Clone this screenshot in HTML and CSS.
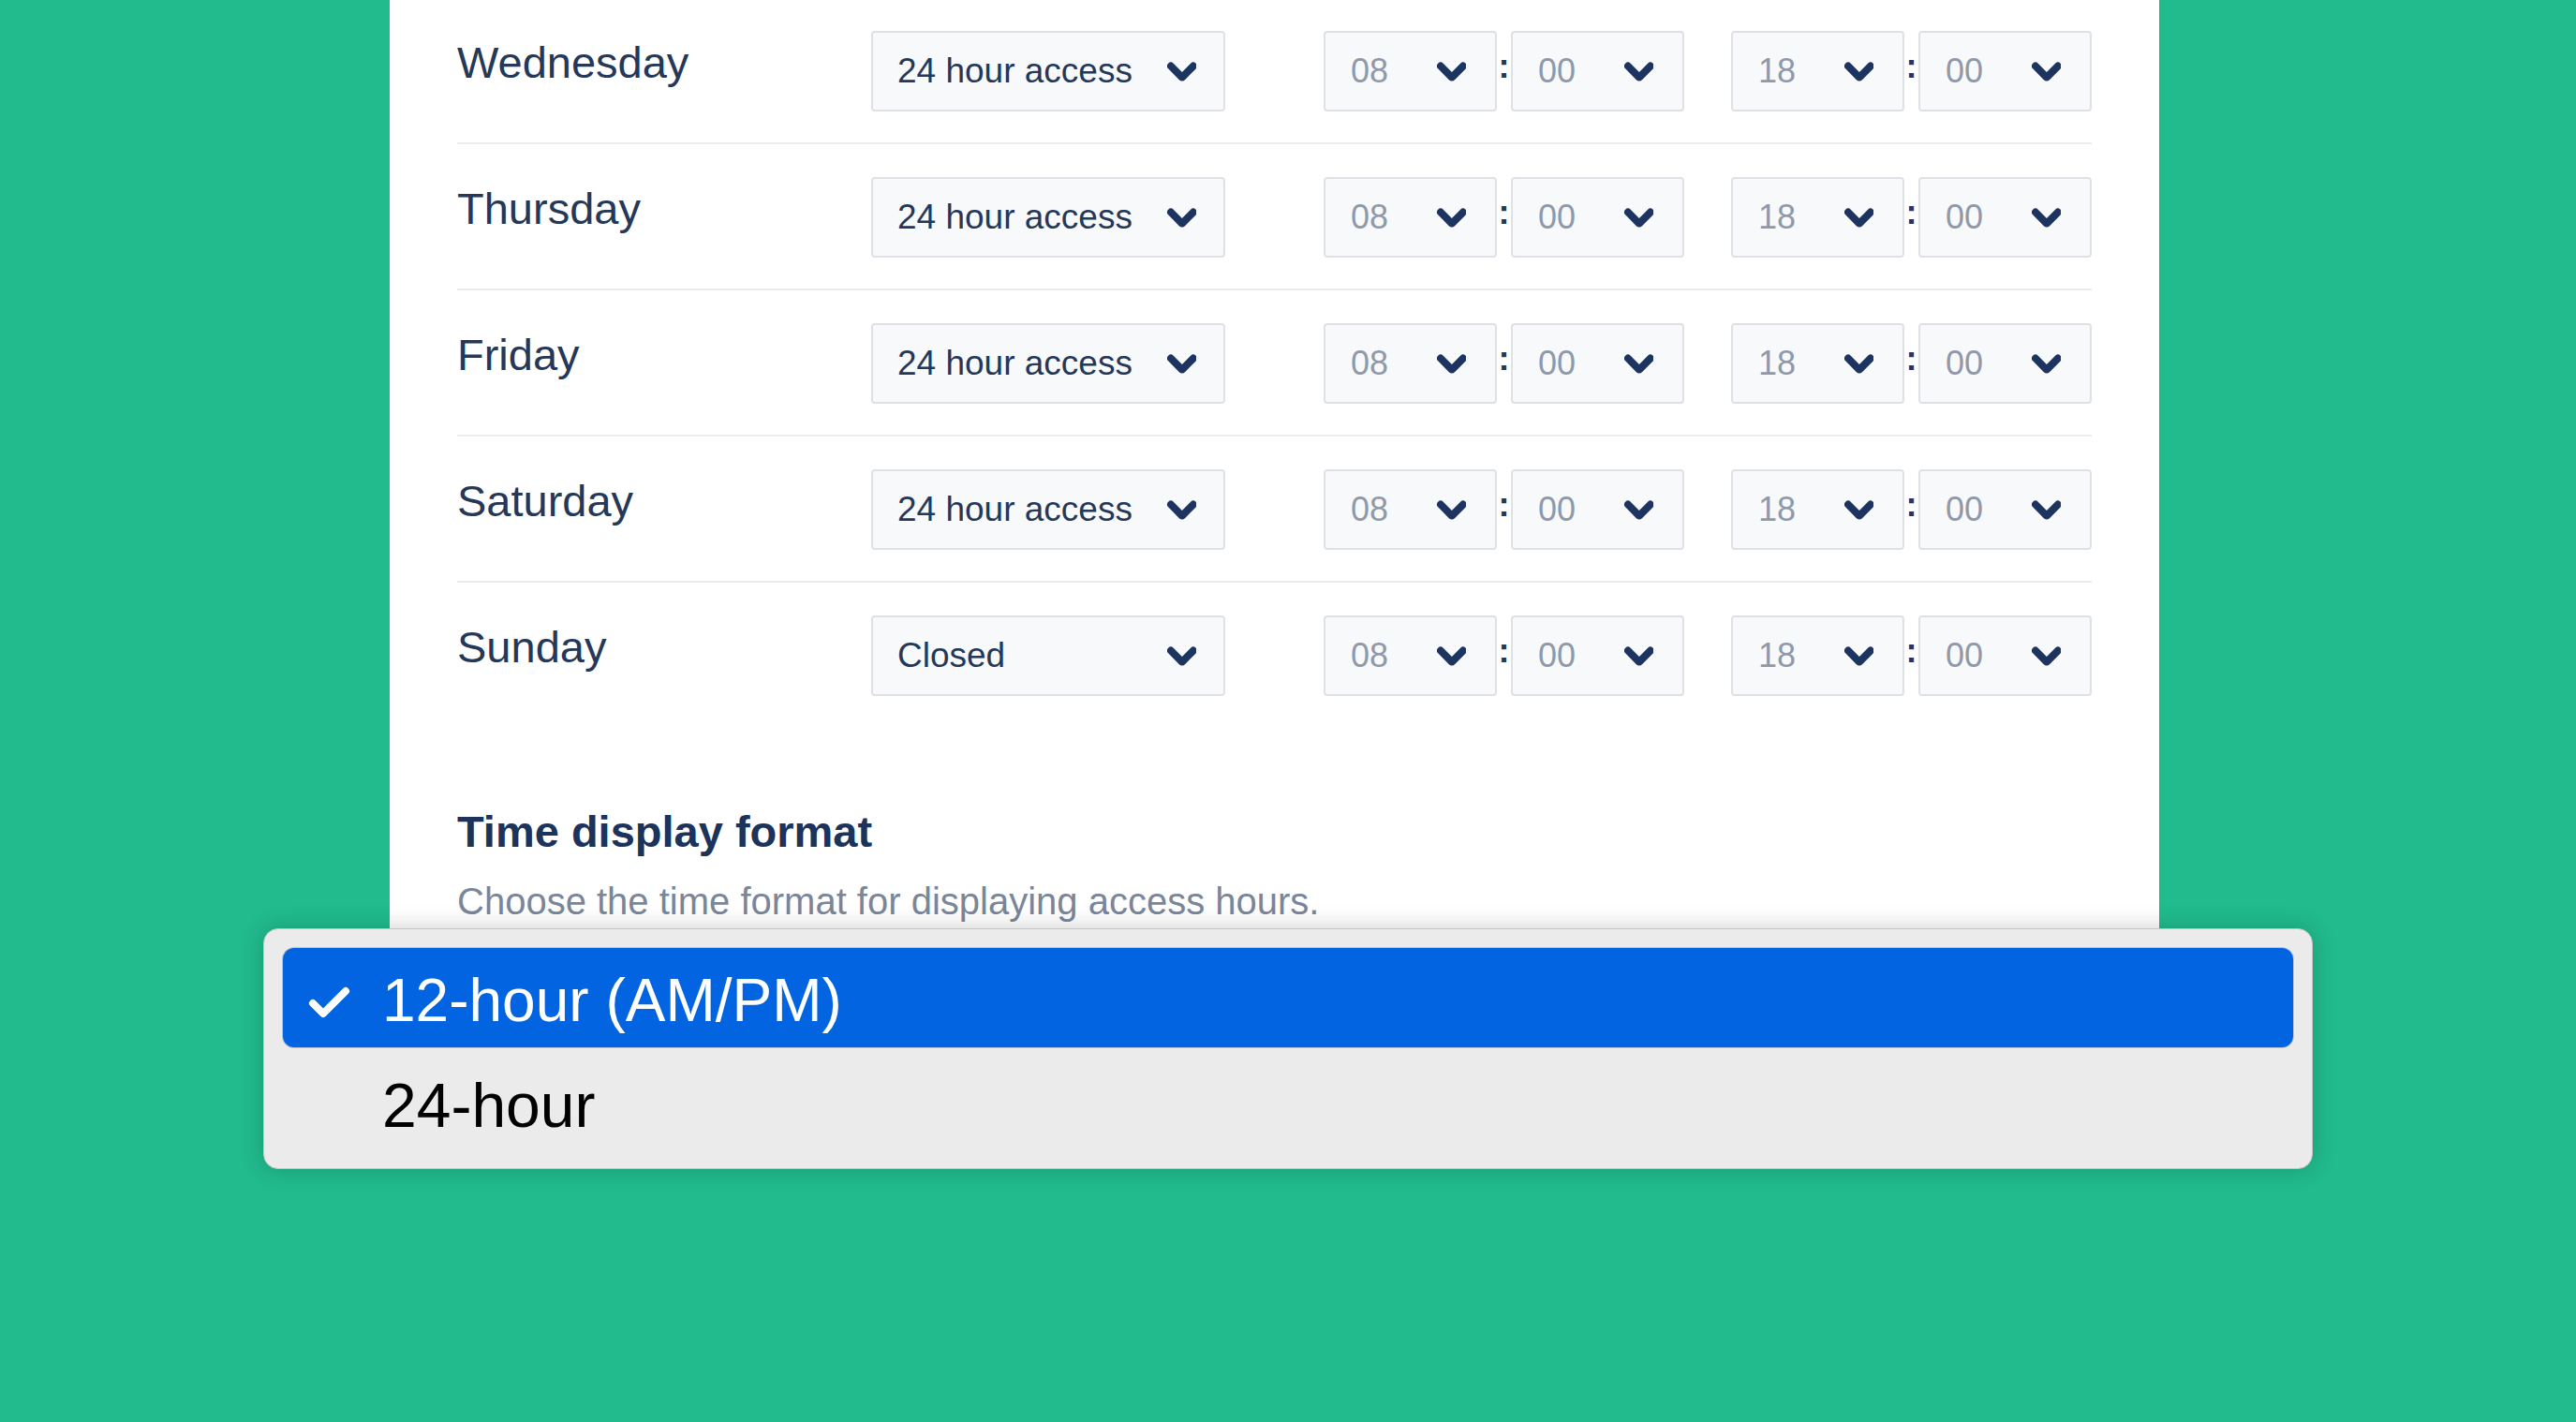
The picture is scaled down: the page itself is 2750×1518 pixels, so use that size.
FILE: index.html
```html
<!DOCTYPE html>
<html lang="en">
<head>
<meta charset="utf-8">
<title>Access hours</title>
<link rel="stylesheet" href="styles.css">
</head>
<body>
<svg width="0" height="0" class="defs" aria-hidden="true">
  <defs>
    <symbol id="chev" viewBox="8 9.9 7.8 5.2">
      <path d="M8.292 10.293a1.009 1.009 0 0 0 0 1.419l2.939 2.965c.218.215.5.322.779.322s.556-.107.769-.322l2.93-2.955a1.01 1.01 0 0 0 0-1.419.987.987 0 0 0-1.406 0l-2.298 2.317-2.307-2.327a.99.99 0 0 0-1.406 0z"/>
    </symbol>
  </defs>
</svg>
<main class="panel">
  <div class="rows">
    <div class="row">
      <div class="day">Wednesday</div>
      <div class="select access"><span>24 hour access</span><svg class="chev"><use href="#chev"/></svg></div>
      <div class="time first">
        <div class="select num"><span>08</span><svg class="chev"><use href="#chev"/></svg></div><span class="colon">:</span>
        <div class="select num"><span>00</span><svg class="chev"><use href="#chev"/></svg></div>
      </div>
      <div class="time second">
        <div class="select num"><span>18</span><svg class="chev"><use href="#chev"/></svg></div><span class="colon">:</span>
        <div class="select num"><span>00</span><svg class="chev"><use href="#chev"/></svg></div>
      </div>
    </div>
    <div class="row">
      <div class="day">Thursday</div>
      <div class="select access"><span>24 hour access</span><svg class="chev"><use href="#chev"/></svg></div>
      <div class="time first">
        <div class="select num"><span>08</span><svg class="chev"><use href="#chev"/></svg></div><span class="colon">:</span>
        <div class="select num"><span>00</span><svg class="chev"><use href="#chev"/></svg></div>
      </div>
      <div class="time second">
        <div class="select num"><span>18</span><svg class="chev"><use href="#chev"/></svg></div><span class="colon">:</span>
        <div class="select num"><span>00</span><svg class="chev"><use href="#chev"/></svg></div>
      </div>
    </div>
    <div class="row">
      <div class="day">Friday</div>
      <div class="select access"><span>24 hour access</span><svg class="chev"><use href="#chev"/></svg></div>
      <div class="time first">
        <div class="select num"><span>08</span><svg class="chev"><use href="#chev"/></svg></div><span class="colon">:</span>
        <div class="select num"><span>00</span><svg class="chev"><use href="#chev"/></svg></div>
      </div>
      <div class="time second">
        <div class="select num"><span>18</span><svg class="chev"><use href="#chev"/></svg></div><span class="colon">:</span>
        <div class="select num"><span>00</span><svg class="chev"><use href="#chev"/></svg></div>
      </div>
    </div>
    <div class="row">
      <div class="day">Saturday</div>
      <div class="select access"><span>24 hour access</span><svg class="chev"><use href="#chev"/></svg></div>
      <div class="time first">
        <div class="select num"><span>08</span><svg class="chev"><use href="#chev"/></svg></div><span class="colon">:</span>
        <div class="select num"><span>00</span><svg class="chev"><use href="#chev"/></svg></div>
      </div>
      <div class="time second">
        <div class="select num"><span>18</span><svg class="chev"><use href="#chev"/></svg></div><span class="colon">:</span>
        <div class="select num"><span>00</span><svg class="chev"><use href="#chev"/></svg></div>
      </div>
    </div>
    <div class="row">
      <div class="day">Sunday</div>
      <div class="select access"><span>Closed</span><svg class="chev"><use href="#chev"/></svg></div>
      <div class="time first">
        <div class="select num"><span>08</span><svg class="chev"><use href="#chev"/></svg></div><span class="colon">:</span>
        <div class="select num"><span>00</span><svg class="chev"><use href="#chev"/></svg></div>
      </div>
      <div class="time second">
        <div class="select num"><span>18</span><svg class="chev"><use href="#chev"/></svg></div><span class="colon">:</span>
        <div class="select num"><span>00</span><svg class="chev"><use href="#chev"/></svg></div>
      </div>
    </div>
  </div>
  <section class="format">
    <h2 class="format-title">Time display format</h2>
    <p class="format-desc">Choose the time format for displaying access hours.</p>
  </section>
</main>
<div class="menu" role="listbox">
  <div class="item selected" role="option" aria-selected="true">
    <svg class="check" viewBox="0 0 47 36"><polyline points="6,19 17,30 41,6"/></svg>
    <span>12-hour (AM/PM)</span>
  </div>
  <div class="item second-item" role="option">
    <span>24-hour</span>
  </div>
</div>
</body>
</html>
```
FILE: styles.css
```css
html, body {
  margin: 0;
  padding: 0;
}
body {
  width: 2750px;
  height: 1518px;
  overflow: hidden;
  background: #21bb8d;
  font-family: "Liberation Sans", Arial, Helvetica, sans-serif;
  position: relative;
}
.defs {
  position: absolute;
}
.panel {
  width: 1889px;
  margin-left: 416px;
  background: #ffffff;
  box-sizing: border-box;
  padding: 0 72px 200px;
}
.rows {
  margin-top: -3px;
  padding-top: 1px;
}
.row {
  display: flex;
  align-items: flex-start;
  padding: 35px 0 33px;
  border-bottom: 2px solid #ebecf0;
}
.row:last-child {
  border-bottom: none;
}
.day {
  flex: none;
  width: 442px;
  margin-top: 6px;
  font-size: 47px;
  line-height: 56px;
  color: #253858;
}
.select {
  flex: none;
  box-sizing: border-box;
  height: 86px;
  border: 2px solid #dfe1e6;
  border-radius: 4px;
  background: #f8f9fb;
  display: flex;
  align-items: center;
  justify-content: space-between;
}
.select span {
  line-height: 40px;
}
.access {
  width: 378px;
  padding: 0 29px 0 26px;
  font-size: 37px;
  color: #253858;
}
.num {
  width: 185px;
  padding: 0 31px 0 27px;
  font-size: 36px;
  color: #8f99aa;
}
.chev {
  width: 31px;
  height: 21px;
  fill: #1d3461;
}
.time {
  flex: none;
  display: flex;
  align-items: flex-start;
}
.time.first {
  margin-left: 105px;
}
.time.second {
  margin-left: 50px;
}
.colon {
  width: 15px;
  text-align: center;
  font-size: 36px;
  font-weight: bold;
  line-height: 36px;
  margin-top: 20px;
  color: #253858;
}
.format {
  margin-top: 84px;
}
.format-title {
  margin: 0;
  font-size: 47px;
  line-height: 56px;
  font-weight: bold;
  color: #1c335c;
}
.format-desc {
  margin: 22px 0 0;
  font-size: 40px;
  line-height: 48px;
  color: #7a869a;
}
.menu {
  position: absolute;
  left: 281px;
  top: 991px;
  width: 2188px;
  box-sizing: border-box;
  padding: 20px 20px 23px;
  background: #ebebeb;
  border: 1px solid #c6c6c6;
  border-radius: 16px;
  box-shadow: 0 0 26px rgba(0, 0, 0, 0.2);
}
.item {
  box-sizing: border-box;
  height: 106px;
  display: flex;
  align-items: flex-start;
  padding: 19px 0 0 106px;
  font-size: 64px;
  line-height: 74px;
  color: #000000;
  border-radius: 12px;
}
.item.selected {
  padding-left: 26px;
  background: #0264e1;
  color: #ffffff;
  box-shadow: 0 0 0 1px rgba(160, 170, 190, 0.6);
}
.item.second-item {
  padding-top: 25px;
  font-size: 66px;
}
.check {
  flex: none;
  width: 47px;
  height: 36px;
  margin: 21px 33px 0 0;
  fill: none;
  stroke: #ffffff;
  stroke-width: 8;
  stroke-linecap: round;
  stroke-linejoin: round;
}
```
